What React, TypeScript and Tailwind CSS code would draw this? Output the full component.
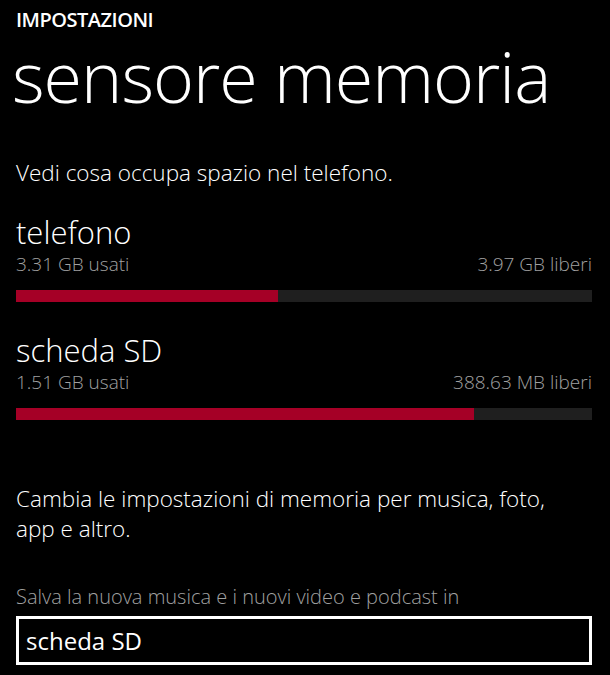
import React from 'react';

type Storage = { name: string; used: string; free: string; pct: number };

const storages: Storage[] = [
  { name: 'telefono', used: '3.31 GB usati', free: '3.97 GB liberi', pct: 45.5 },
  { name: 'scheda SD', used: '1.51 GB usati', free: '388.63 MB liberi', pct: 79.6 },
];

const font = { fontFamily: '"Open Sans", "Noto Sans", sans-serif' };

function StorageRow({ s }: { s: Storage }) {
  return (
    <div>
      <div className="text-[31px] leading-[36px] text-white font-light">{s.name}</div>
      <div className="mt-[2px] flex justify-between text-[19px] leading-[24px] text-[#a0a0a0] font-light">
        <span>{s.used}</span>
        <span>{s.free}</span>
      </div>
      <div className="mt-[14px] h-[12px] bg-[#1f1f1f] flex">
        <div className="h-full bg-[#a50026]" style={{ width: `${s.pct}%` }} />
      </div>
    </div>
  );
}

export default function App() {
  return (
    <div className="w-[610px] h-[675px] bg-black text-white overflow-hidden pl-[16px] pr-[18px]" style={font}>
      <div className="pt-[8px] text-[20px] leading-[24px] font-semibold tracking-tight">IMPOSTAZIONI</div>
      <div className="mt-[2px] text-[70px] leading-[84px] font-light tracking-[-1px] -ml-[4px]">sensore memoria</div>
      <div className="mt-[40px] text-[22.5px] leading-[30px] font-light">Vedi cosa occupa spazio nel telefono.</div>

      <div className="mt-[26px] flex flex-col gap-[30px]">
        {storages.map((s) => (
          <StorageRow key={s.name} s={s} />
        ))}
      </div>

      <div className="mt-[64px] text-[22.5px] leading-[30px] font-light">
        Cambia le impostazioni di memoria per musica, foto,
        <br />
        app e altro.
      </div>

      <div className="mt-[41px] text-[20px] leading-[24px] text-[#a0a0a0] font-light">
        Salva la nuova musica e i nuovi video e podcast in
      </div>
      <div className="mt-[7px] h-[49px] border-[3px] border-white flex items-center px-[7px] text-[24px] font-normal">
        scheda SD
      </div>
    </div>
  );
}
